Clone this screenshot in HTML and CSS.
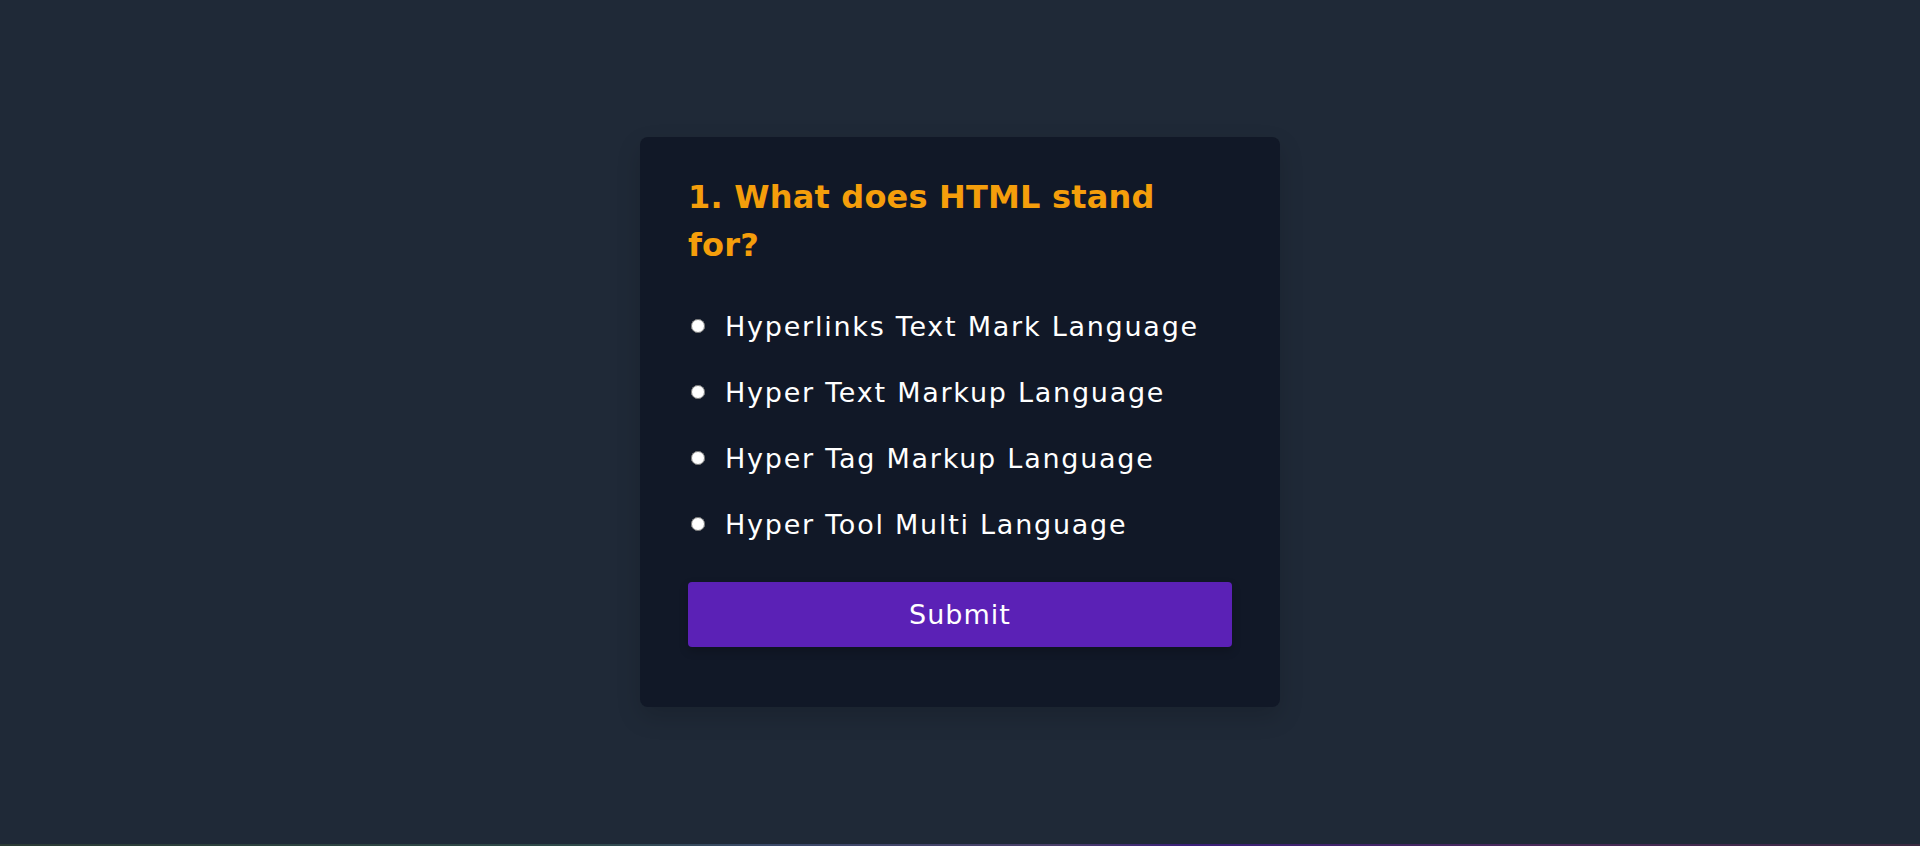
FILE: index.html
```html
<!DOCTYPE html>
<html lang="en">
<head>
<meta charset="utf-8">
<title>Quiz</title>
<link rel="stylesheet" href="styles.css">
</head>
<body>
<main class="page">
  <div class="quiz-card">
    <h2 class="question">1. What does HTML stand for?</h2>
    <ul class="answers">
      <li><label class="answer"><input type="radio" name="answer" class="radio"><span>Hyperlinks Text Mark Language</span></label></li>
      <li><label class="answer"><input type="radio" name="answer" class="radio"><span>Hyper Text Markup Language</span></label></li>
      <li><label class="answer"><input type="radio" name="answer" class="radio"><span>Hyper Tag Markup Language</span></label></li>
      <li><label class="answer"><input type="radio" name="answer" class="radio"><span>Hyper Tool Multi Language</span></label></li>
    </ul>
    <button class="submit">Submit</button>
  </div>
</main>
<div class="bottom-line"></div>
</body>
</html>
```
FILE: styles.css
```css
* { box-sizing: border-box; }
html, body { margin: 0; height: 100%; }
body {
  background: #1f2937;
  font-family: "DejaVu Sans", "Open Sans", sans-serif;
  color: #fff;
  display: flex;
  flex-direction: column;
}
.page {
  flex: 1;
  display: flex;
  align-items: center;
  justify-content: center;
}
.quiz-card {
  width: 640px;
  background: #111827;
  border-radius: 8px;
  padding: 36px 48px 60px;
  box-shadow: 0 10px 25px rgba(0,0,0,0.15);
}
.question {
  margin: 0;
  max-width: 500px;
  color: #f59e0b;
  font-size: 32px;
  font-weight: 700;
  line-height: 48px;
  letter-spacing: 0.2px;
}
.answers {
  list-style: none;
  margin: 39px 0 0;
  padding: 0;
  display: flex;
  flex-direction: column;
  gap: 30px;
}
.answer {
  display: flex;
  align-items: center;
  height: 36px;
  font-size: 27px;
  letter-spacing: 1.75px;
  cursor: pointer;
}
.radio {
  margin: 0 20px 0 3px;
  width: 14px;
  height: 14px;
}
.submit {
  display: block;
  width: 100%;
  height: 65px;
  margin-top: 40px;
  border: none;
  border-radius: 4px;
  background: #5b21b6;
  color: #fff;
  font-family: inherit;
  font-size: 27px;
  letter-spacing: 1px;
  box-shadow: 0 4px 10px rgba(0,0,0,0.2);
  cursor: pointer;
}
.bottom-line {
  height: 2px;
  background: linear-gradient(90deg, #2b3a35 0%, #2f4a4a 30%, #3b4a6a 40%, #4a3f6a 55%, #3b1f7a 62%, #4a2a5a 80%, #3a2a40 100%);
}
```
